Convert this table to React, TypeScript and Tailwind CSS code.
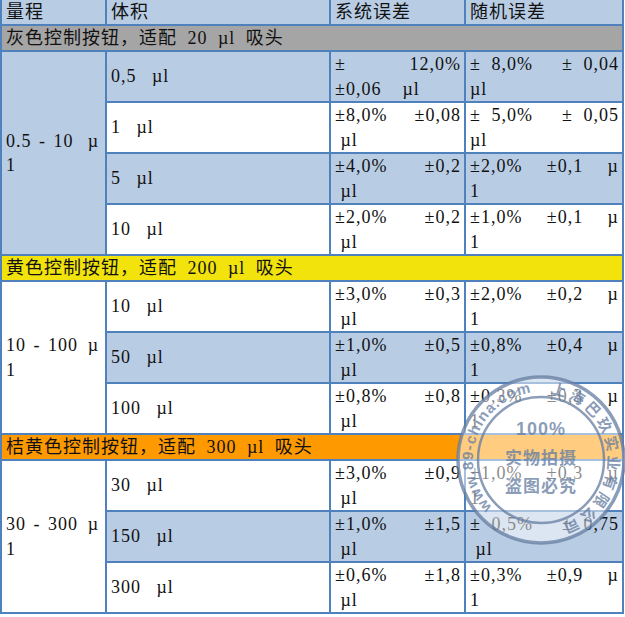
type Line = string[]

type Row = {
  vol: string
  bg: string
  sys: Line[]
  rnd: Line[]
}

type Group = {
  title: string
  titleBg: string
  rangeBg: string
  range: Line[]
  rows: Row[]
}

const BLUE = 'bg-[#b8cce4]'
const WHITE = 'bg-white'

const groups: Group[] = [
  {
    title: '灰色控制按钮，适配 20 µl 吸头',
    titleBg: 'bg-[#a5a5a5]',
    rangeBg: BLUE,
    range: [['0.5 - 10', 'µ'], ['1']],
    rows: [
      { vol: '0,5 µl', bg: BLUE, sys: [['±', '12,0%'], ['±0,06  µl']], rnd: [['± 8,0%', '± 0,04'], ['µl']] },
      { vol: '1 µl', bg: WHITE, sys: [['±8,0%', '±0,08'], [' µl']], rnd: [['± 5,0%', '± 0,05'], ['µl']] },
      { vol: '5 µl', bg: BLUE, sys: [['±4,0%', '±0,2'], [' µl']], rnd: [['±2,0%', '±0,1', 'µ'], ['1']] },
      { vol: '10 µl', bg: WHITE, sys: [['±2,0%', '±0,2'], [' µl']], rnd: [['±1,0%', '±0,1', 'µ'], ['1']] },
    ],
  },
  {
    title: '黄色控制按钮，适配 200 µl 吸头',
    titleBg: 'bg-[#f2e30c]',
    rangeBg: WHITE,
    range: [['10 - 100', 'µ'], ['1']],
    rows: [
      { vol: '10 µl', bg: WHITE, sys: [['±3,0%', '±0,3'], [' µl']], rnd: [['±2,0%', '±0,2', 'µ'], ['1']] },
      { vol: '50 µl', bg: BLUE, sys: [['±1,0%', '±0,5'], [' µl']], rnd: [['±0,8%', '±0,4', 'µ'], ['1']] },
      { vol: '100 µl', bg: WHITE, sys: [['±0,8%', '±0,8'], [' µl']], rnd: [['±0,3%', '±0,3', 'µ'], ['1']] },
    ],
  },
  {
    title: '桔黄色控制按钮，适配 300 µl 吸头',
    titleBg: 'bg-[#fe9900]',
    rangeBg: WHITE,
    range: [['30 - 300', 'µ'], ['1']],
    rows: [
      { vol: '30 µl', bg: WHITE, sys: [['±3,0%', '±0,9'], [' µl']], rnd: [['±1,0%', '±0,3', 'µ'], ['1']] },
      { vol: '150 µl', bg: BLUE, sys: [['±1,0%', '±1,5'], [' µl']], rnd: [['± 0,5%', '± 0,75'], [' µl']] },
      { vol: '300 µl', bg: WHITE, sys: [['±0,6%', '±1,8'], [' µl']], rnd: [['±0,3%', '±0,9', 'µ'], ['1']] },
    ],
  },
]

const cell = 'border-2 border-[#4f81bd] pl-[4px] pr-[3px] py-0 text-left align-middle'

function CellLines({ lines }: { lines: Line[] }) {
  return (
    <>
      {lines.map((line, i) => (
        <div key={i} className={line.length > 1 ? 'flex justify-between' : ''}>
          {line.map((part, j) => (
            <span key={j} className="whitespace-pre">
              {part}
            </span>
          ))}
        </div>
      ))}
    </>
  )
}

function point(r: number, deg: number) {
  const a = (deg * Math.PI) / 180
  return `${(85 + r * Math.sin(a)).toFixed(2)} ${(85 - r * Math.cos(a)).toFixed(2)}`
}

function arcPath(r: number, from: number, to: number) {
  const large = to - from > 180 ? 1 : 0
  return `M ${point(r, from)} A ${r} ${r} 0 ${large} 1 ${point(r, to)}`
}

function Stamp() {
  const ink = 'rgba(100,124,160,0.75)'
  return (
    <svg
      className="absolute left-[456px] top-[375px] font-['Liberation_Sans','Noto_Sans_CJK_SC',sans-serif]"
      width="170"
      height="170"
      viewBox="0 0 170 170"
    >
      <defs>
        <path id="arc-left" d={arcPath(68, 226, 354)} />
        <path id="arc-right" d={arcPath(67, 8, 165)} />
      </defs>
      <circle cx="85" cy="85" r="83" fill="rgba(255,255,255,0.5)" stroke={ink} strokeWidth="3.5" />
      <circle cx="85" cy="85" r="63" fill="none" stroke={ink} strokeWidth="2.5" />
      <text fontSize="15" fontWeight="bold" fill={ink}>
        <textPath href="#arc-left" textLength="150" lengthAdjust="spacing">
          www.89-china.com
        </textPath>
      </text>
      <text fontSize="15" fontWeight="bold" fill={ink}>
        <textPath href="#arc-right" textLength="180" lengthAdjust="spacing">
          上海巴玖实业有限公司
        </textPath>
      </text>
      <text x="85" y="60" textAnchor="middle" fontSize="18" fontWeight="bold" fill={ink}>
        100%
      </text>
      <text x="85" y="89" textAnchor="middle" fontSize="17" fontWeight="bold" fill={ink}>
        实物拍摄
      </text>
      <text x="85" y="117" textAnchor="middle" fontSize="17" fontWeight="bold" fill={ink}>
        盗图必究
      </text>
    </svg>
  )
}

export default function App() {
  return (
    <div className="relative w-[625px] h-[617px] overflow-hidden bg-white text-[18px] tracking-[1px] [word-spacing:5px] text-[#111] font-['Liberation_Serif','Noto_Sans_CJK_SC',serif]">
      <table className="table-fixed border-collapse w-[622px]">
        <colgroup>
          <col className="w-[105px]" />
          <col className="w-[224px]" />
          <col className="w-[135px]" />
          <col className="w-[158px]" />
        </colgroup>
        <tbody>
          <tr className={`${BLUE} h-[25px] leading-[24px]`}>
            <td className={`${cell} border-t-0`}>量程</td>
            <td className={`${cell} border-t-0`}>体积</td>
            <td className={`${cell} border-t-0`}>系统误差</td>
            <td className={`${cell} border-t-0`}>随机误差</td>
          </tr>
          {groups.map((g) => (
            <GroupRows key={g.title} group={g} />
          ))}
        </tbody>
      </table>
      <Stamp />
    </div>
  )
}

function GroupRows({ group }: { group: Group }) {
  return (
    <>
      <tr className="h-[26px] leading-[24px]">
        <td colSpan={4} className={`${cell} ${group.titleBg}`}>
          {group.title}
        </td>
      </tr>
      {group.rows.map((row, i) => (
        <tr key={row.vol} className="h-[51px] leading-[24.5px]">
          {i === 0 && (
            <td rowSpan={group.rows.length} className={`${cell} ${group.rangeBg} [word-spacing:2px] pr-[6px]`}>
              <CellLines lines={group.range} />
            </td>
          )}
          <td className={`${cell} ${row.bg} [word-spacing:10px]`}>{row.vol}</td>
          <td className={`${cell} ${row.bg}`}>
            <CellLines lines={row.sys} />
          </td>
          <td className={`${cell} ${row.bg}`}>
            <CellLines lines={row.rnd} />
          </td>
        </tr>
      ))}
    </>
  )
}
